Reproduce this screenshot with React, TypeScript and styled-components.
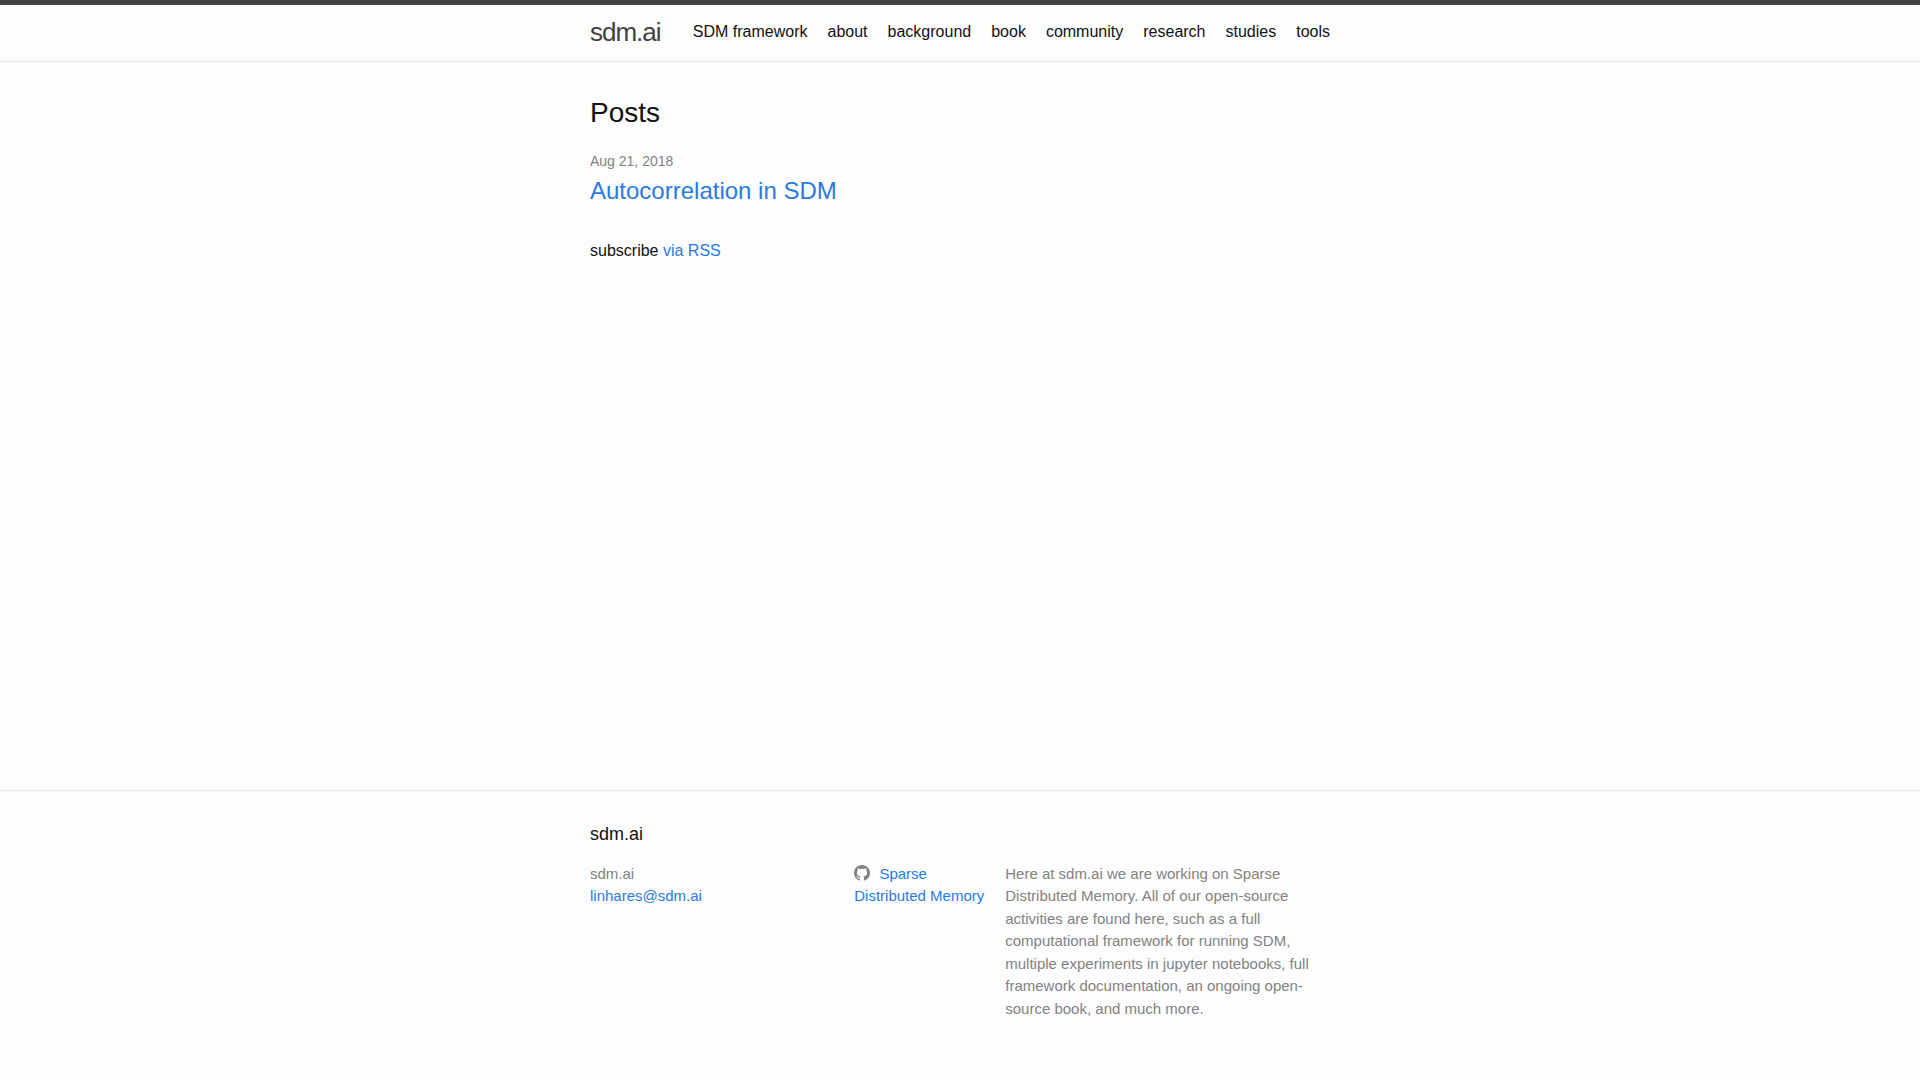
import React from "react";
import styled, { createGlobalStyle } from "styled-components";

const GlobalStyle = createGlobalStyle`
  *, *::before, *::after { box-sizing: border-box; }
  body, h1, h2, h3, p, ul { margin: 0; padding: 0; }
  body {
    font: 400 16px/24px "Liberation Sans", Arial, sans-serif;
    color: #111;
    background: #fdfdfd;
  }
`;

const Page = styled.div`
  min-height: 100vh;
  display: flex;
  flex-direction: column;
`;

const Wrapper = styled.div`
  max-width: 800px;
  margin: 0 auto;
  padding: 0 30px;
`;

const Header = styled.header`
  border-top: 5px solid #424242;
  border-bottom: 1px solid #e8e8e8;
`;

const HeaderRow = styled(Wrapper)`
  display: flex;
  justify-content: space-between;
  min-height: 56px;
`;

const SiteTitle = styled.a`
  font-size: 26px;
  font-weight: 300;
  line-height: 54px;
  letter-spacing: -1px;
  color: #424242;
  text-decoration: none;
`;

const Nav = styled.nav`
  display: flex;
  gap: 20px;
  line-height: 54px;
`;

const NavLink = styled.a`
  color: #111;
  text-decoration: none;
`;

const Link = styled.a`
  color: #2a7ae2;
  text-decoration: none;
  &:hover { text-decoration: underline; }
`;

const Main = styled.main`
  flex: 1 0 auto;
  padding: 30px 0;
`;

const ListHeading = styled.h2`
  font-size: 28px;
  font-weight: 400;
  line-height: 42px;
  margin-bottom: 15px;
`;

const PostList = styled.ul`
  list-style: none;
  margin-bottom: 30px;
`;

const PostDate = styled.span`
  display: block;
  font-size: 14px;
  line-height: 24px;
  color: #828282;
`;

const PostTitle = styled.h3`
  font-size: 24px;
  font-weight: 400;
  line-height: 36px;
`;

const Footer = styled.footer`
  border-top: 1px solid #e8e8e8;
  padding: 30px 0;
`;

const FooterHeading = styled.h2`
  font-size: 18px;
  font-weight: 400;
  line-height: 27px;
  margin-bottom: 15px;
`;

const FooterColumns = styled.div`
  display: grid;
  grid-template-columns: 35% 20% 45%;
  width: calc(100% + 15px);
  font-size: 15px;
  line-height: 1.5;
  color: #828282;
`;

const Column = styled.div`
  padding-right: 15px;
  margin-bottom: 30px;
`;

const ContactList = styled.ul`
  list-style: none;
`;

const GithubIcon = styled.svg`
  width: 16px;
  height: 16px;
  fill: #828282;
  vertical-align: text-top;
  margin-right: 5px;
`;

const pages = ["SDM framework", "about", "background", "book", "community", "research", "studies", "tools"];

export default function App() {
  return (
    <Page>
      <GlobalStyle />
      <Header>
        <HeaderRow>
          <SiteTitle href="#">sdm.ai</SiteTitle>
          <Nav>
            {pages.map((page) => (
              <NavLink key={page} href="#">{page}</NavLink>
            ))}
          </Nav>
        </HeaderRow>
      </Header>
      <Main>
        <Wrapper>
          <ListHeading>Posts</ListHeading>
          <PostList>
            <li>
              <PostDate>Aug 21, 2018</PostDate>
              <PostTitle><Link href="#">Autocorrelation in SDM</Link></PostTitle>
            </li>
          </PostList>
          <p>subscribe <Link href="#">via RSS</Link></p>
        </Wrapper>
      </Main>
      <Footer>
        <Wrapper>
          <FooterHeading>sdm.ai</FooterHeading>
          <FooterColumns>
            <Column>
              <ContactList>
                <li>sdm.ai</li>
                <li><Link href="#">linhares@sdm.ai</Link></li>
              </ContactList>
            </Column>
            <Column>
              <Link href="#">
                <GithubIcon viewBox="0 0 16 16" aria-hidden="true">
                  <path d="M8 0C3.58 0 0 3.582 0 8c0 3.535 2.292 6.533 5.47 7.59.4.075.547-.172.547-.385 0-.19-.007-.693-.01-1.36-2.226.483-2.695-1.073-2.695-1.073-.364-.924-.889-1.17-.889-1.17-.726-.496.055-.486.055-.486.803.056 1.226.824 1.226.824.714 1.223 1.873.87 2.329.665.072-.517.278-.87.507-1.07-1.777-.2-3.644-.888-3.644-3.953 0-.873.31-1.587.823-2.147-.083-.202-.358-1.015.077-2.117 0 0 .672-.215 2.2.82A7.67 7.67 0 0 1 8 3.868c.68.003 1.364.092 2.003.27 1.527-1.035 2.198-.82 2.198-.82.436 1.102.162 1.915.08 2.117.512.56.822 1.274.822 2.147 0 3.073-1.87 3.75-3.653 3.947.287.248.543.735.543 1.482 0 1.069-.01 1.932-.01 2.194 0 .215.144.463.55.385C13.71 14.53 16 11.534 16 8c0-4.418-3.582-8-8-8z" />
                </GithubIcon>
                {" "}Sparse Distributed Memory
              </Link>
            </Column>
            <Column>
              <p>
                Here at sdm.ai we are working on Sparse Distributed Memory. All of our open-source
                activities are found here, such as a full computational framework for running SDM,
                multiple experiments in jupyter notebooks, full framework documentation, an ongoing
                open-source book, and much more.
              </p>
            </Column>
          </FooterColumns>
        </Wrapper>
      </Footer>
    </Page>
  );
}
